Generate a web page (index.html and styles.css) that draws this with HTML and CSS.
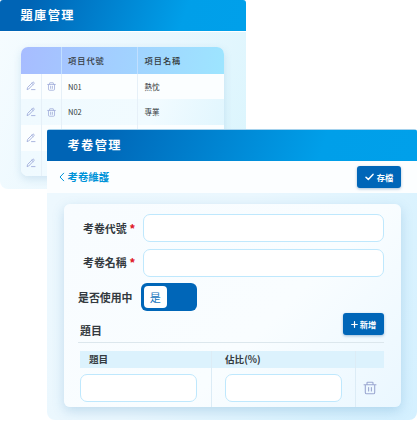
FILE: index.html
```html
<!DOCTYPE html>
<html lang="zh-Hant">
<head>
<meta charset="utf-8">
<title>考卷管理</title>
<link rel="stylesheet" href="styles.css">
</head>
<body>
<svg class="defs" aria-hidden="true">
  <symbol id="pen" viewBox="0 0 10 10"><path d="M1.2 8.3 1.6 6.4 6.7 1.3 Q7.3.8 7.9 1.4 8.5 2 8 2.6L2.9 7.8zM5.8 2.2 7.1 3.5M5.5 8.6H9"/></symbol>
  <symbol id="trash" viewBox="0 0 14 14"><path d="M1 3.8H13M4 3.6V1.8Q4 1.2 4.6 1.2H9.4Q10 1.2 10 1.8V3.6M2.3 4V11.4Q2.3 12.8 3.7 12.8H10.3Q11.7 12.8 11.7 11.4V4M5.6 6.5V10M8.4 6.5V10"/></symbol>
</svg>
<main class="desktop">
  <section class="window bank">
    <header class="titlebar">題庫管理</header>
    <div class="list">
      <div class="row head"><span class="wide"></span><span>項目代號</span><span>項目名稱</span></div>
      <div class="row"><i><svg class="pen"><use href="#pen"/></svg></i><i><svg class="bin"><use href="#trash"/></svg></i><span>N01</span><span>熱忱</span></div>
      <div class="row alt"><i><svg class="pen"><use href="#pen"/></svg></i><i><svg class="bin"><use href="#trash"/></svg></i><span>N02</span><span>專業</span></div>
      <div class="row"><i><svg class="pen"><use href="#pen"/></svg></i><i></i><span></span><span></span></div>
      <div class="row alt"><i><svg class="pen"><use href="#pen"/></svg></i><i></i><span></span><span></span></div>
    </div>
  </section>
  <section class="window paper">
    <header class="titlebar">考卷管理</header>
    <nav class="toolbar">
      <a class="back"><svg viewBox="0 0 6 10"><path d="M4.7 1.2 1 5 4.7 8.8"/></svg>考卷維護</a>
      <button class="btn save"><svg viewBox="0 0 9 8"><path d="M1 4.2 3.3 6.4 8 1.4"/></svg>存檔</button>
    </nav>
    <div class="card">
      <div class="field"><label>考卷代號<b>*</b></label><input type="text"></div>
      <div class="field"><label>考卷名稱<b>*</b></label><input type="text"></div>
      <div class="switch-row"><label>是否使用中</label><div class="switch"><span>是</span></div></div>
      <div class="section"><h2>題目</h2><button class="btn add"><svg viewBox="0 0 8 8"><path d="M4 .8V7.2M.8 4H7.2"/></svg>新增</button></div>
      <div class="grid">
        <div class="th first">題目</div><div class="th">佔比(%)</div><div class="th"></div>
        <div class="td first"><input type="text"></div><div class="td"><input type="text"></div><div class="td last"><svg class="bin"><use href="#trash"/></svg></div>
      </div>
    </div>
  </section>
</main>
</body>
</html>
```
FILE: styles.css
```css
* { box-sizing: border-box; }
body {
  margin: 0;
  background: #fff;
  color: #343a40;
  font-family: "Noto Sans CJK TC", "Noto Sans", sans-serif;
  overflow: hidden;
}
.defs { display: none; }
svg { display: block; fill: none; stroke: currentColor; stroke-linecap: round; stroke-linejoin: round; }
.desktop { position: relative; width: 417px; height: 422px; }
.window { position: absolute; overflow: hidden; border-radius: 3px 3px 8px 8px; }
.titlebar {
  display: flex;
  align-items: center;
  background: linear-gradient(110deg, #0064b5 12%, #009fe9 74%, #00a0ea);
  color: #fff;
  font-size: 12.2px;
  font-weight: 700;
  letter-spacing: 1.4px;
  line-height: 1;
}

.bank {
  left: 0;
  top: 0;
  width: 246px;
  height: 189px;
  background: linear-gradient(115deg, #f5fcff 5%, #e9f7fe 55%, #d9f5fd);
}
.bank .titlebar { height: 32px; padding: 0 20.5px; border-bottom: 1px solid #fff; }
.list {
  width: 203.5px;
  margin: 15px 0 0 20.5px;
  border-radius: 7px;
  overflow: hidden;
  background: #fbfeff;
  box-shadow: 0 3px 8px rgba(80, 145, 190, .2);
}
.row {
  display: grid;
  grid-template-columns: 21px 20px 76.5px 1fr;
  height: 25.7px;
  font-size: 7.5px;
  line-height: 1;
}
.row > * { display: flex; align-items: center; border-right: 1px solid #e6f0f8; }
.row > :last-child { border-right: 0; }
.row > span { padding-left: 6.5px; }
.row > i { justify-content: center; padding-left: 1px; color: #a2aedb; }
.row .wide { grid-column: span 2; }
.head {
  height: 26.5px;
  background: linear-gradient(100deg, #a7bcff, #a2d0ff 48%, #9de5ff);
  font-size: 8.2px;
  font-weight: 500;
  letter-spacing: 1px;
}
.head > * { border-color: #c1dfff; }
.alt { background: linear-gradient(110deg, #f0faff, #f1fbff 65%, #e1f6fe); }
.pen { width: 10px; height: 10px; stroke-width: .9; }
.row .bin { width: 9px; height: 9px; stroke-width: 1.3; }

.paper {
  left: 47px;
  top: 129px;
  width: 370px;
  height: 291px;
  background: linear-gradient(120deg, #edf8fe 8%, #eaf7fe 45%, #d9f2fe 80%, #d4f0ff);
}
.paper .titlebar { height: 32px; padding: 0 20.5px; border-top: 1px solid #a5d2ed; }
.toolbar {
  display: flex;
  align-items: center;
  justify-content: space-between;
  height: 32px;
  padding: 0 16px 0 11.5px;
  background: #fcfeff;
}
.back { display: flex; align-items: center; gap: 3px; color: #0093d8; font-size: 10.4px; font-weight: 700; line-height: 1; }
.back svg { width: 6px; height: 10px; }
.btn {
  display: flex;
  align-items: center;
  justify-content: center;
  height: 22px;
  padding: 0;
  border: 0;
  border-radius: 3px;
  background: #0066b8;
  color: #fff;
  font: 700 8.2px/1 "Noto Sans CJK TC", sans-serif;
  box-shadow: 0 1px 3px rgba(0, 75, 140, .35);
}
.save { width: 44px; gap: 3px; }
.save svg { width: 9px; height: 8px; stroke-width: 1.5; }
.add { width: 41px; gap: 2px; }
.add svg { width: 7px; height: 7px; stroke-width: 1.4; }
.card {
  width: 337px;
  height: 203px;
  margin: 11px 0 0 17px;
  padding: 10px 17px 0 14px;
  border-radius: 6px;
  background: linear-gradient(135deg, #f8fcff, #f9fdff 60%, #eaf7ff);
  box-shadow: 0 4px 12px rgba(70, 140, 190, .26);
}
label { font-size: 10.9px; font-weight: 700; line-height: 1; white-space: nowrap; }
input {
  display: block;
  height: 28px;
  min-width: 0;
  padding: 0 8px;
  border: 1px solid #bfe8fd;
  border-radius: 7px;
  background: #fff;
  outline: 0;
}
.field { display: grid; grid-template-columns: 65px 241px; align-items: center; margin-bottom: 6.5px; }
.field label { padding-left: 5px; }
.field b { margin-left: 3px; color: #e0202a; }
.switch-row { display: flex; align-items: center; }
.switch-row label { width: 63px; }
.switch { width: 56px; height: 28px; padding: 3px; border-radius: 6px; background: #0066b8; }
.switch span {
  display: flex;
  align-items: center;
  justify-content: center;
  width: 22.5px;
  height: 22px;
  border-radius: 4px;
  background: #fff;
  color: #1474bd;
  font-size: 11px;
  line-height: 1;
}
.section {
  display: flex;
  justify-content: space-between;
  align-items: flex-start;
  height: 30px;
  margin-top: 2px;
  padding-left: 2px;
  border-bottom: 1px solid #dce7ed;
}
.section h2 { margin: 12px 0 0; font-size: 10.9px; font-weight: 700; line-height: 1; }
.grid { display: grid; grid-template-columns: 132px 144px 28px; grid-template-rows: 17px 39px; margin: 8px 0 0 2px; }
.grid > * { border-right: 1px solid #dcecf6; }
.grid > :nth-child(3n) { border-right: 0; }
.th { padding-left: 13px; background: #dcf2fd; font-size: 9.6px; font-weight: 700; line-height: 17px; }
.th.first { padding-left: 9px; }
.td { padding: 6px 0 0 12.5px; }
.td.first { padding-left: 0; }
.td input { width: 117px; }
.td.last { padding: 13px 0 0 7px; color: #9ba7d1; }
.td .bin { width: 14px; height: 14px; stroke-width: 1.1; }
```
